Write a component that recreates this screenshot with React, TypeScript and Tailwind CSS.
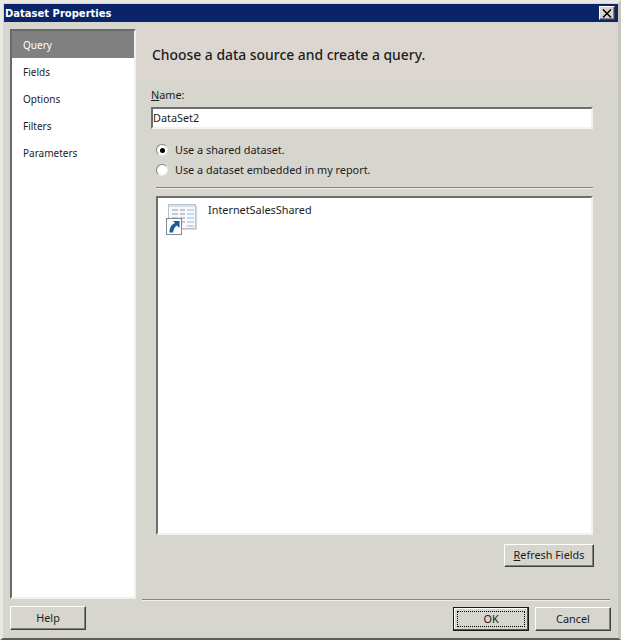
import * as React from "react";

const navItems = ["Query", "Fields", "Options", "Filters", "Parameters"];

const raised =
  "border border-t-white border-l-white border-r-[#404040] border-b-[#404040] bg-[#d6d5ce] shadow-[inset_-1px_-1px_0_#808080]";
const sunken = "border-2 border-t-[#6e6e6e] border-l-[#6e6e6e] border-r-[#f4f2ee] border-b-[#f4f2ee] bg-white";

const Radio = ({ checked, label }: { checked?: boolean; label: string }) => (
  <div className="flex items-center h-5">
    <span className="relative w-[12px] h-[12px] rounded-full bg-white border border-t-[#808080] border-l-[#808080] border-r-[#e8e6e0] border-b-[#e8e6e0] mr-[7px]">
      {checked && <span className="absolute left-[2.5px] top-[2.5px] w-[5px] h-[5px] rounded-full bg-black" />}
    </span>
    <span>{label}</span>
  </div>
);

const SharedDatasetIcon = () => (
  <svg width="32" height="32" viewBox="0 0 32 32" className="shrink-0">
    <rect x="2.5" y="0.5" width="27" height="24" fill="#f6f8fb" stroke="#b9c3cf" />
    <rect x="3" y="1" width="26" height="2" fill="#d8dee6" />
    <path d="M6 6h6M6 10h6M6 14h6M6 18h6M14 6h5M14 10h5M14 14h5M14 18h5" stroke="#8c98a6" />
    <path d="M21 6h7M21 10h7M21 14h7M21 18h7M21 22h7" stroke="#9db6d3" />
    <path d="M30.5 2v24M4 25.5h26" stroke="#d5d8dc" />
    <rect x="0.5" y="14.5" width="15" height="16" fill="#ffffff" stroke="#7f8a94" />
    <path d="M7 17h6.500v7L11 21.500C8.500 23 7.500 25 7 28.500H3.500C3.500 24 5 20.500 9 19z" fill="#1d5a97" />
  </svg>
);

export default function App() {
  return (
    <div
      className="w-[621px] h-[640px] flex flex-col bg-[#d6d5ce] border-t-[3px] border-l-[3px] border-r-[3px] border-b-[2px] border-t-[#e9e7e2] border-l-[#e9e7e2] border-r-[#c6c5bd] border-b-[#5c5c56] overflow-hidden text-[10.85px] text-[#1c1c1c]"
      style={{ fontFamily: '"Noto Sans", sans-serif' }}
    >
      {/* title bar */}
      <div className="h-[18px] mt-[1px] ml-[1px] flex items-center justify-between bg-[#0a246a] pl-[1px] pr-[3px] shrink-0">
        <span className="text-white font-bold text-[10px]" style={{ fontFamily: '"DejaVu Sans", sans-serif' }}>
          Dataset Properties
        </span>
        <span className={`w-[16px] h-[14px] flex items-center justify-center ${raised}`}>
          <svg width="10" height="9" viewBox="0 0 10 9">
            <path d="M1 0.5l8 8M9 0.5l-8 8" stroke="#000" strokeWidth="1.5" />
          </svg>
        </span>
      </div>

      <div className="flex-1 flex min-h-0">
        {/* left column */}
        <div className="w-[133px] pl-[7px] pt-[7px] flex flex-col shrink-0">
          <div className="w-[126px] h-[570px] bg-white border-2 border-t-[#6a6a6a] border-l-[#6a6a6a] border-r-[#f2f0ec] border-b-[#f2f0ec]">
            {navItems.map((item, i) => (
              <div
                key={item}
                className={`h-[27px] pl-[11px] pt-[1px] text-[10px] flex items-center ${i === 0 ? "bg-[#808080] text-white" : "text-[#1c1c1c]"}`}
              >
                {item}
              </div>
            ))}
          </div>
          <div className={`mt-[7px] w-[76px] h-[24px] flex items-center justify-center ${raised}`}>Help</div>
        </div>

        {/* main */}
        <div className="flex-1 flex flex-col min-w-0">
          <div className="h-[59px] mt-[1px] bg-[#dcd6d0] pl-[16px] pt-[22px] text-[13.9px] leading-[20px] font-medium">
            Choose a data source and create a query.
          </div>
          <div className="pl-[15px] pr-[25px] flex-1 flex flex-col">
            <div className="mt-[5px] h-[15px] leading-[15px]">
              <span className="underline">N</span>ame:
            </div>
            <div className={`mt-[5px] h-[22px] flex items-center ${sunken}`}>DataSet2</div>
            <div className="mt-[11px] pl-[5px]">
              <Radio checked label="Use a shared dataset." />
              <Radio label="Use a dataset embedded in my report." />
            </div>
            <div className="mt-[7px] ml-[5px] border-t border-t-[#85857f] border-b border-b-[#f0eee8] h-[2px]" />
            <div className={`mt-[7px] ml-[5px] h-[339px] flex items-start pl-[8px] pt-[5px] gap-[10px] ${sunken}`}>
              <div className="pt-[1px]"><SharedDatasetIcon /></div>
              <span className="leading-[14px]">InternetSalesShared</span>
            </div>
            <div className="flex justify-end -mr-[1px] mt-[9px]">
              <div className={`w-[90px] h-[23px] flex items-center justify-center ${raised}`}>
                <span><span className="underline">R</span>efresh Fields</span>
              </div>
            </div>
          </div>
          <div className="mr-[8px] ml-[6px] border-t border-t-[#85857f] border-b border-b-[#f0eee8] h-[2px]" />
          <div className="flex justify-end gap-[6px] pr-[7px] pt-[6px] pb-[7px]">
            <div className="w-[76px] h-[24px] flex items-center justify-center border border-[#1a1a1a] bg-[#d6d5ce] shadow-[inset_-1px_-1px_0_#555,inset_1px_1px_0_#fff]">
              <div className="w-[68px] h-[16px] flex items-center justify-center border border-dotted border-black">OK</div>
            </div>
            <div className={`w-[76px] h-[24px] flex items-center justify-center ${raised}`}>Cancel</div>
          </div>
        </div>
      </div>
    </div>
  );
}
